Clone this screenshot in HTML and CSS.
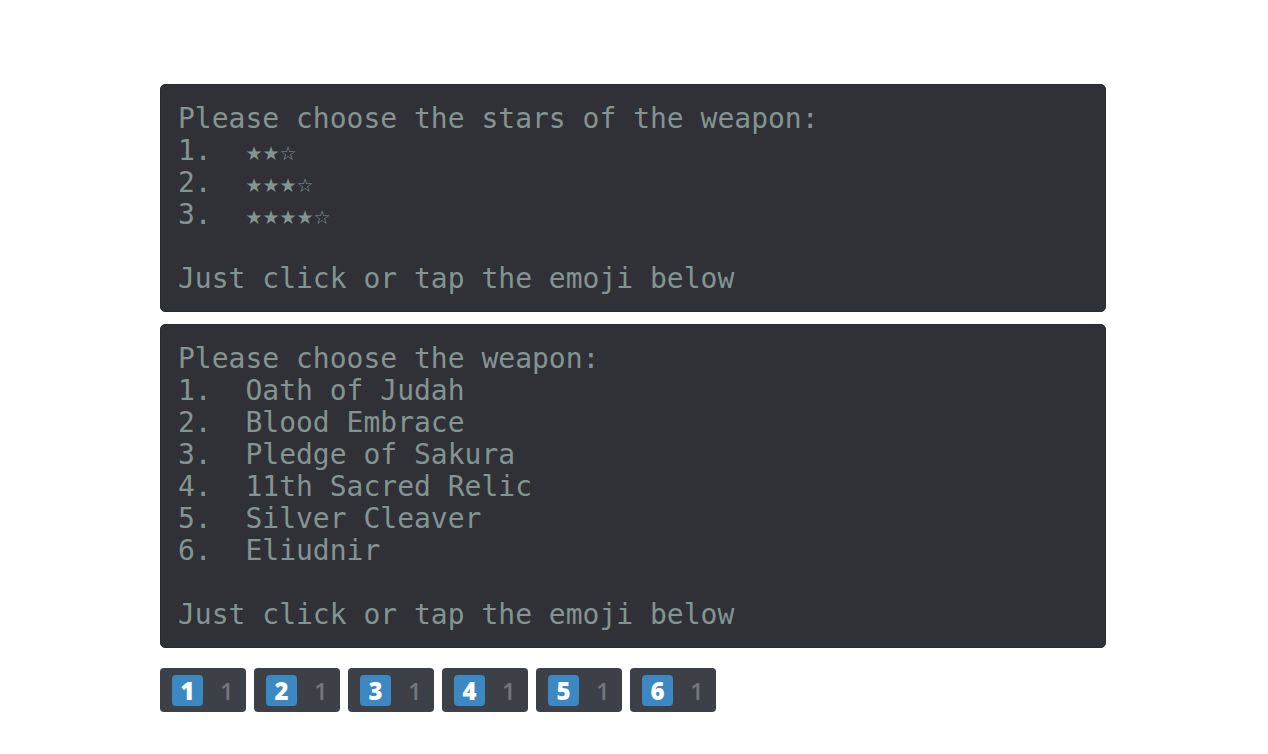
FILE: index.html
```html
<!DOCTYPE html>
<html>
<head>
<meta charset="utf-8">
<link rel="stylesheet" href="styles.css">
</head>
<body>
<main class="chat">
<pre class="codeblock">Please choose the stars of the weapon:
1.  <span class="stars">★★☆</span>
2.  <span class="stars">★★★☆</span>
3.  <span class="stars">★★★★☆</span>

Just click or tap the emoji below</pre>
<pre class="codeblock">Please choose the weapon:
1.  Oath of Judah
2.  Blood Embrace
3.  Pledge of Sakura
4.  11th Sacred Relic
5.  Silver Cleaver
6.  Eliudnir

Just click or tap the emoji below</pre>
<div class="reactions">
  <div class="reaction"><span class="keycap">1</span><span class="count">1</span></div>
  <div class="reaction"><span class="keycap">2</span><span class="count">1</span></div>
  <div class="reaction"><span class="keycap">3</span><span class="count">1</span></div>
  <div class="reaction"><span class="keycap">4</span><span class="count">1</span></div>
  <div class="reaction"><span class="keycap">5</span><span class="count">1</span></div>
  <div class="reaction"><span class="keycap">6</span><span class="count">1</span></div>
</div>
</main>
</body>
</html>
```
FILE: styles.css
```css
html, body {
  margin: 0;
  padding: 0;
  background: #ffffff;
}
.chat {
  width: 946px;
  margin: 84px 0 0 160px;
  display: flex;
  flex-direction: column;
}
.codeblock {
  margin: 0 0 12px 0;
  padding: 18px 17px 16px 17px;
  background: #2f3136;
  border: 1px solid #292b2f;
  border-radius: 5px;
  color: #849493;
  font-family: "DejaVu Sans Mono", monospace;
  font-size: 28px;
  line-height: 32px;
  white-space: pre;
}
.stars {
  font-family: "DejaVu Sans", sans-serif;
  font-size: 19px;
  line-height: 0;
}
.reactions {
  display: flex;
  gap: 8px;
  margin-top: 8px;
}
.reaction {
  width: 86px;
  height: 44px;
  box-sizing: border-box;
  background: #3d4046;
  border-radius: 4px;
  display: flex;
  align-items: center;
  padding-left: 12px;
  gap: 17px;
}
.keycap {
  width: 31px;
  height: 31px;
  background: #3b88c3;
  border-radius: 4px;
  color: #ffffff;
  font-family: "Open Sans", "DejaVu Sans", sans-serif;
  font-weight: 800;
  font-size: 24px;
  line-height: 31px;
  text-align: center;
}
.count {
  color: #72767d;
  font-family: "Open Sans", "DejaVu Sans", sans-serif;
  font-weight: 600;
  font-size: 24px;
  line-height: 31px;
}
```
